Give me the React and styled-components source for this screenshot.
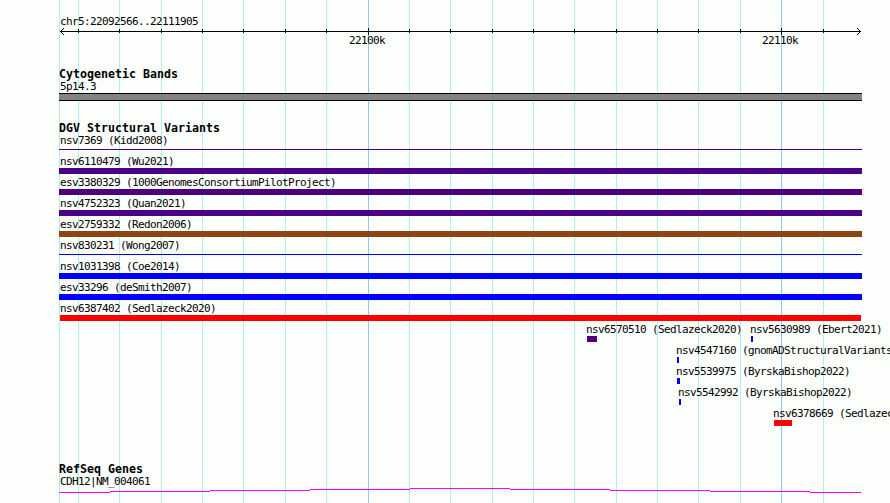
import React from "react";
import styled, { createGlobalStyle } from "styled-components";

const GlobalStyle = createGlobalStyle`
  * { box-sizing: border-box; }
  html, body { margin: 0; padding: 0; overflow: hidden; background: #fcfefc; }
`;

const Browser = styled.main`
  position: relative;
  width: 890px;
  height: 503px;
  overflow: hidden;
  display: flex;
  flex-direction: column;
  background: #fcfefc;
  color: #000;
  font-family: "DejaVu Sans Mono", "Liberation Mono", monospace;
`;

const GridLines = styled.svg`
  position: absolute;
  inset: 0;
`;

const Label = styled.div`
  position: relative;
  height: 12px;
  line-height: 11px;
  font-size: 11px;
  letter-spacing: -0.622px;
  white-space: pre;
`;

const Title = styled.h2`
  position: relative;
  margin: 0 0 1px 59px;
  height: 12px;
  line-height: 12px;
  font-size: 11.6px;
  letter-spacing: 0.015px;
  font-weight: 700;
  white-space: pre;
`;

const Ruler = styled.header`
  display: flex;
  flex-direction: column;
  height: 68px;
  padding-top: 16px;
`;

const Axis = styled.svg`
  position: relative;
  display: block;
  flex: none;
`;

const AxisLabels = styled.div`
  display: grid;
`;

const Placed = styled.div`
  grid-area: 1 / 1;
  margin-left: ${(p) => p.$x}px;
`;

const Track = styled.section`
  display: flex;
  flex-direction: column;
  flex: none;
  height: ${(p) => p.$height}px;
`;

const Band = styled.div`
  position: relative;
  width: 803px;
  height: 8px;
  margin-left: 59px;
  background: #848284;
  border: solid #000;
  border-width: 1px 0;
`;

const Lane = styled.div`
  display: grid;
  flex: none;
  height: 21px;
`;

const Bar = styled.div`
  position: relative;
  width: ${(p) => p.$width}px;
  height: ${(p) => (p.$thin ? 1 : 6)}px;
  margin: ${(p) => (p.$thin ? 2 : 0)}px 0 0 ${(p) => p.$offset}px;
  background: ${(p) => p.$color};
`;

const GeneLine = styled.svg`
  position: relative;
  display: block;
`;

const minor = [78, 119, 161, 202, 243, 285, 326, 409, 450, 492, 533, 574, 616, 657, 698, 740, 823];
const major = [368, 781];

const indigo = "#4b0082";
const brown = "#8b4513";
const blue = "#0000ff";
const red = "#ff0000";

const full = (name, color, thin) => [{ name, color, thin, x: 60, offset: -1, width: 803 }];
const lanes = [
  full("nsv7369 (Kidd2008)", indigo, true),
  full("nsv6110479 (Wu2021)", indigo),
  full("esv3380329 (1000GenomesConsortiumPilotProject)", indigo),
  full("nsv4752323 (Quan2021)", indigo),
  full("esv2759332 (Redon2006)", brown),
  full("nsv830231 (Wong2007)", blue, true),
  full("nsv1031398 (Coe2014)", blue),
  full("esv33296 (deSmith2007)", blue),
  [{ name: "nsv6387402 (Sedlazeck2020)", color: red, x: 60, offset: 0, width: 801 }],
  [
    { name: "nsv6570510 (Sedlazeck2020)", color: indigo, x: 586, offset: 1, width: 10 },
    { name: "nsv5630989 (Ebert2021)", color: blue, x: 750, offset: 1, width: 2 },
  ],
  [{ name: "nsv4547160 (gnomADStructuralVariants)", color: blue, x: 676, offset: 1, width: 2 }],
  [{ name: "nsv5539975 (ByrskaBishop2022)", color: blue, x: 676, offset: 1, width: 3 }],
  [{ name: "nsv5542992 (ByrskaBishop2022)", color: blue, x: 678, offset: 1, width: 2 }],
  [{ name: "nsv6378669 (Sedlazeck2020)", color: red, x: 773, offset: 1, width: 18 }],
];

function Feature({ item }) {
  return (
    <Placed $x={item.x}>
      <Label>{item.name}</Label>
      <Bar $width={item.width} $thin={item.thin} $offset={item.offset} $color={item.color} />
    </Placed>
  );
}

export default function App() {
  return (
    <>
      <GlobalStyle />
      <Browser>
        <GridLines width="890" height="503" shapeRendering="crispEdges">
          {[59, ...minor].map((x) => (
            <rect key={x} x={x} y="0" width="1" height="503" fill="#afeeee" />
          ))}
          {major.map((x) => (
            <rect key={x} x={x} y="0" width="1" height="503" fill="#87ceeb" />
          ))}
        </GridLines>

        <Ruler>
          <Placed $x={60}>
            <Label>chr5:22092566..22111905</Label>
          </Placed>
          <Axis width="890" height="7" shapeRendering="crispEdges">
            <rect x="60" y="3" width="801" height="1" />
            {minor.map((x) => (
              <rect key={x} x={x} y="1" width="1" height="4" />
            ))}
            {major.map((x) => (
              <rect key={x} x={x} y="0" width="1" height="7" />
            ))}
            {[1, 2, 3].map((d) => (
              <React.Fragment key={d}>
                <rect x={60 + d} y={3 - d} width="1" height="1" />
                <rect x={60 + d} y={3 + d} width="1" height="1" />
                <rect x={860 - d} y={3 - d} width="1" height="1" />
                <rect x={860 - d} y={3 + d} width="1" height="1" />
              </React.Fragment>
            ))}
          </Axis>
          <AxisLabels>
            <Placed $x={349}><Label>22100k</Label></Placed>
            <Placed $x={762}><Label>22110k</Label></Placed>
          </AxisLabels>
        </Ruler>

        <Track $height={54}>
          <Title>Cytogenetic Bands</Title>
          <Placed $x={60}><Label>5p14.3</Label></Placed>
          <Band />
        </Track>

        <Track $height={341}>
          <Title>DGV Structural Variants</Title>
          {lanes.map((items) => (
            <Lane key={items[0].name}>
              {items.map((item) => <Feature key={item.name} item={item} />)}
            </Lane>
          ))}
        </Track>

        <Track $height={40}>
          <Title>RefSeq Genes</Title>
          <Placed $x={60}><Label>CDH12|NM_004061</Label></Placed>
          <GeneLine width="890" height="15" shapeRendering="crispEdges">
            {[
              [59, 4, 51], [110, 3, 100], [210, 2, 100], [310, 1, 100], [410, 0, 100],
              [510, 1, 100], [610, 2, 100], [710, 3, 100], [810, 4, 51],
            ].map(([x, y, w]) => (
              <rect key={x} x={x} y={y} width={w} height="1" fill="#ff00ff" />
            ))}
          </GeneLine>
        </Track>
      </Browser>
    </>
  );
}
